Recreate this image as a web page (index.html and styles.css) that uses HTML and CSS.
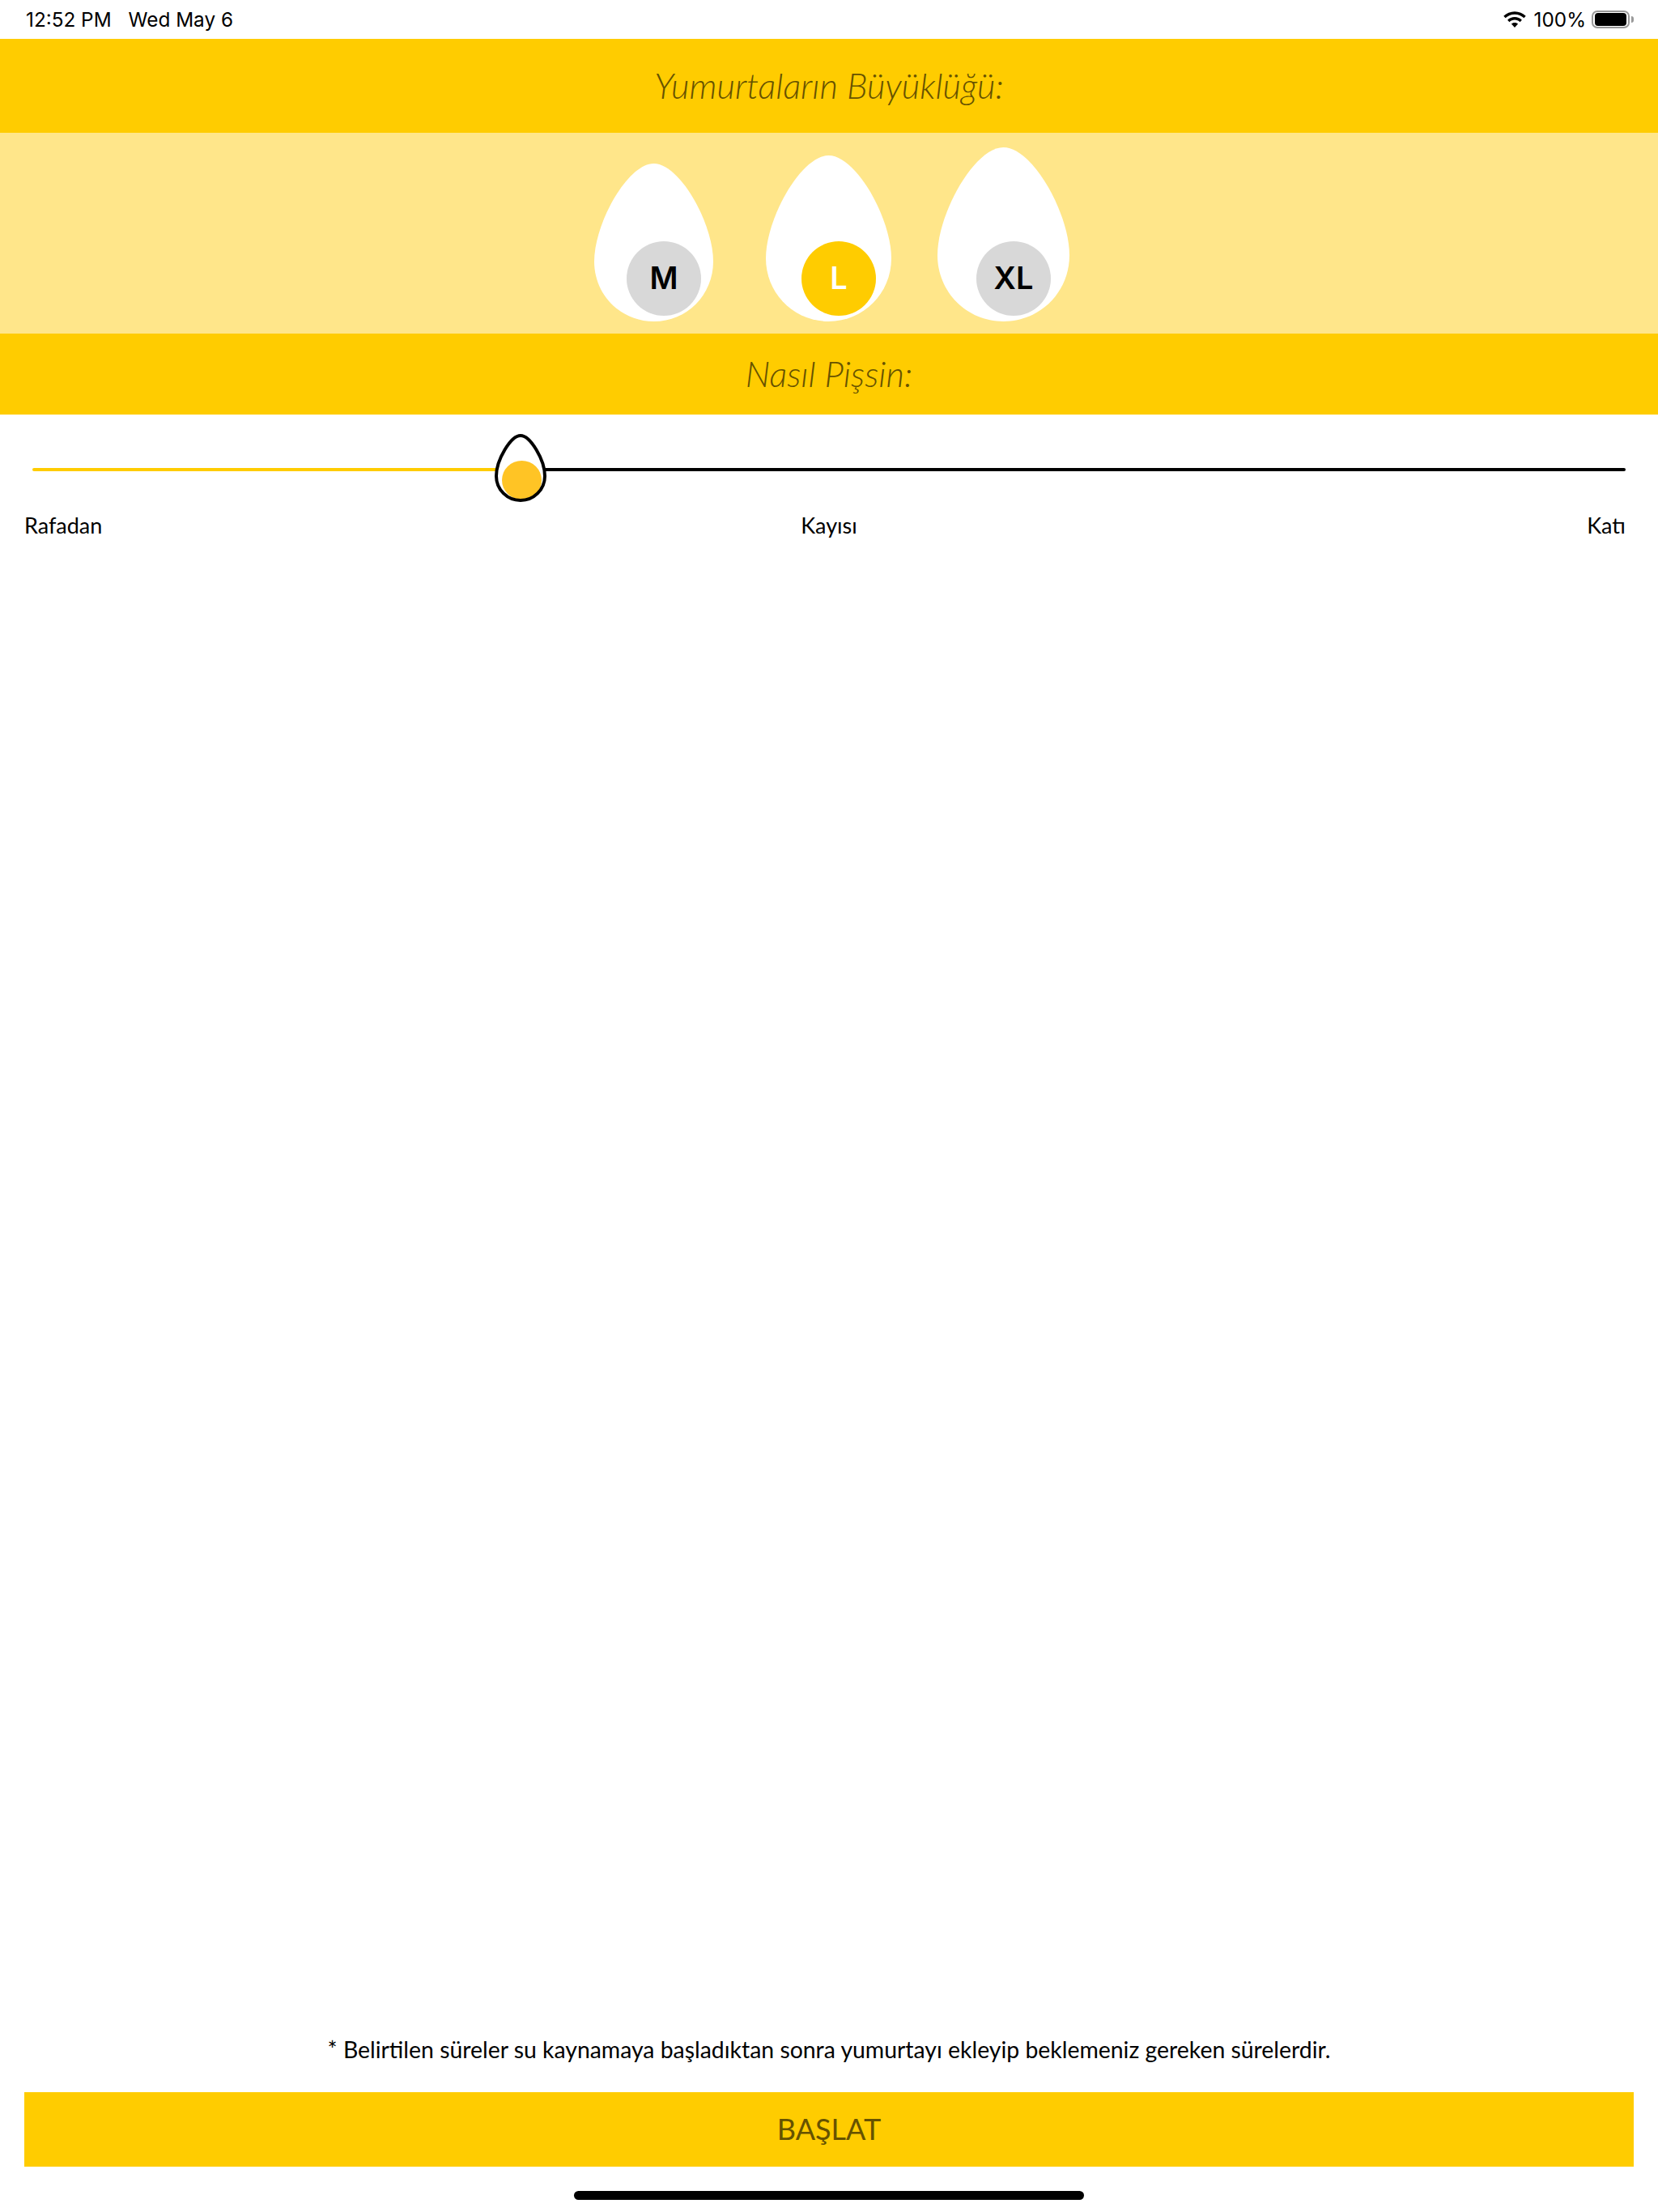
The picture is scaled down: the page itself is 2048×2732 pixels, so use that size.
FILE: index.html
```html
<!DOCTYPE html>
<html lang="tr">
<head>
    <meta charset="UTF-8">
    <title>Yumurta</title>
    <link rel="stylesheet" href="styles.css">
</head>
<body>
    <div class="page">
        <div class="status-bar">
            <div class="status-left">
                <span>12:52 PM</span>
                <span>Wed May 6</span>
            </div>
            <div class="status-right">
                <svg class="wifi" viewBox="2 1 24 17.500">
                    <path d="M14 4.2c3.900 0 7.400 1.500 10 4l2-2.100C22.900 3.100 18.700 1.200 14 1.200S5.100 3.100 2 6.100l2 2.100c2.600-2.500 6.100-4 10-4z"/>
                    <path d="M14 10.200c2.200 0 4.200 .9 5.700 2.300l2.100-2.100C19.700 8.400 17 7.200 14 7.200s-5.700 1.200-7.800 3.200l2.100 2.100c1.500-1.400 3.500-2.300 5.700-2.300z"/>
                    <path d="M14 13.200c-1.500 0-2.700 .6-3.600 1.400L14 18.500l3.600-3.900c-.9-.8-2.100-1.400-3.600-1.400z"/>
                </svg>
                <span class="battery-text">100%</span>
                <div class="battery">
                    <div class="battery-body"><div class="battery-level"></div></div>
                    <div class="battery-tip"></div>
                </div>
            </div>
        </div>

        <div class="band band-size">Yumurtaların Büyüklüğü:</div>

        <div class="eggs">
            <div class="egg egg-m">
                <svg class="egg-shape" viewBox="0 0 100 100" preserveAspectRatio="none">
                    <path d="M50 0C72 0 100 38 100 62C100 83 78 100 50 100C22 100 0 83 0 62C0 38 28 0 50 0Z"/>
                </svg>
                <div class="badge">M</div>
            </div>
            <div class="egg egg-l">
                <svg class="egg-shape" viewBox="0 0 100 100" preserveAspectRatio="none">
                    <path d="M50 0C72 0 100 38 100 62C100 83 78 100 50 100C22 100 0 83 0 62C0 38 28 0 50 0Z"/>
                </svg>
                <div class="badge badge-active">L</div>
            </div>
            <div class="egg egg-xl">
                <svg class="egg-shape" viewBox="0 0 100 100" preserveAspectRatio="none">
                    <path d="M50 0C72 0 100 38 100 62C100 83 78 100 50 100C22 100 0 83 0 62C0 38 28 0 50 0Z"/>
                </svg>
                <div class="badge">XL</div>
            </div>
        </div>

        <div class="band band-cook">Nasıl Pişsin:</div>

        <div class="slider">
            <div class="track">
                <div class="track-done"></div>
                <div class="track-rest"></div>
                <svg class="thumb" viewBox="0 0 64 84">
                    <path class="thumb-egg" d="M32 2C44 2 62 32 62 52C62 69 48 82 32 82C16 82 2 69 2 52C2 32 20 2 32 2Z"/>
                    <ellipse class="thumb-yolk" cx="33.500" cy="57" rx="24.500" ry="24"/>
                    <path class="thumb-line" d="M32 2C44 2 62 32 62 52C62 69 48 82 32 82C16 82 2 69 2 52C2 32 20 2 32 2Z"/>
                </svg>
            </div>
            <div class="slider-labels">
                <span>Rafadan</span>
                <span class="label-mid">Kayısı</span>
                <span class="label-end">Katı</span>
            </div>
        </div>

        <p class="note">* Belirtilen süreler su kaynamaya başladıktan sonra yumurtayı ekleyip beklemeniz gereken sürelerdir.</p>
        <button class="start">BAŞLAT</button>
        <div class="home-bar"></div>
    </div>
</body>
</html>
```

FILE: styles.css
```css
body {
    margin: 0;
    background: white;
    font-family: 'Lato', sans-serif;
    color: black;
}

.page {
    display: flex;
    flex-direction: column;
    height: 2732px;
    overflow: hidden;
}

.status-bar {
    display: flex;
    justify-content: space-between;
    align-items: center;
    height: 48px;
    padding: 0 30px 0 32px;
    box-sizing: border-box;
    font-family: 'Inter', sans-serif;
    font-size: 24.3px;
}

.status-left {
    display: flex;
    gap: 21px;
}

.status-right {
    display: flex;
    align-items: center;
}

.wifi {
    width: 28px;
    height: 20px;
    fill: black;
}

.battery-text {
    margin: 0 7px 0 10px;
}

.battery {
    display: flex;
    align-items: center;
    gap: 2px;
}

.battery-body {
    width: 47px;
    height: 22px;
    padding: 1px 2px;
    box-sizing: border-box;
    border: 2px solid #999;
    border-radius: 7px;
}

.battery-level {
    height: 100%;
    background: black;
    border-radius: 4px;
}

.battery-tip {
    width: 3px;
    height: 8px;
    background: #999;
    border-radius: 0 3px 3px 0;
}

.band {
    display: flex;
    justify-content: center;
    align-items: center;
    padding-bottom: 2px;
    box-sizing: border-box;
    background: #ffcc00;
    color: #665200;
    font-size: 43.5px;
    font-style: italic;
    font-weight: 300;
}

.band-size {
    height: 116px;
}

.band-cook {
    height: 100px;
}

.eggs {
    display: flex;
    justify-content: center;
    align-items: flex-end;
    height: 248px;
    padding: 0 0 15px 7px;
    box-sizing: border-box;
    background: #ffe68a;
}

.egg {
    position: relative;
}

.egg-shape {
    display: block;
    width: 100%;
    height: 100%;
    fill: white;
}

.egg-m {
    width: 147px;
    height: 195px;
}

.egg-l {
    width: 155px;
    height: 205px;
    margin: 0 57px 0 65px;
}

.egg-xl {
    width: 163px;
    height: 215px;
}

.badge {
    position: absolute;
    bottom: 7px;
    display: flex;
    justify-content: center;
    align-items: center;
    padding-bottom: 2px;
    box-sizing: border-box;
    width: 92px;
    height: 92px;
    border-radius: 50%;
    background: #d8d8d8;
    font-family: 'Inter', sans-serif;
    font-size: 38px;
    font-weight: 600;
}

.egg-m .badge {
    left: 40px;
}

.egg-l .badge {
    left: 44px;
}

.egg-xl .badge {
    left: 48px;
}

.badge-active {
    background: #ffcc00;
    color: white;
}

.slider {
    padding: 66px 40px 0 30px;
}

.track {
    position: relative;
    display: flex;
    height: 4px;
    margin-left: 10px;
}

.track-done {
    width: 580px;
    background: #ffcc00;
    border-radius: 2px 0 0 2px;
}

.track-rest {
    flex: 1;
    background: black;
    border-radius: 0 2px 2px 0;
}

.thumb {
    position: absolute;
    left: 571px;
    top: -42px;
    width: 64px;
    height: 84px;
}

.thumb-egg {
    fill: white;
}

.thumb-yolk {
    fill: #ffc425;
}

.thumb-line {
    fill: none;
    stroke: black;
    stroke-width: 4;
}

.slider-labels {
    display: grid;
    grid-template-columns: 1fr auto 1fr;
    margin-top: 50px;
    font-size: 27px;
}

.label-mid {
    padding-left: 10px;
}

.label-end {
    text-align: right;
}

.note {
    margin: auto 0 0;
    text-align: center;
    font-size: 28.4px;
}

.start {
    height: 92px;
    margin: 36px 30px 0;
    padding: 0 0 3px;
    border: none;
    background: #ffcc00;
    color: #665200;
    font-family: 'Lato', sans-serif;
    font-size: 36px;
}

.home-bar {
    width: 630px;
    height: 11px;
    margin: 30px auto 15px;
    background: black;
    border-radius: 6px;
}
```
